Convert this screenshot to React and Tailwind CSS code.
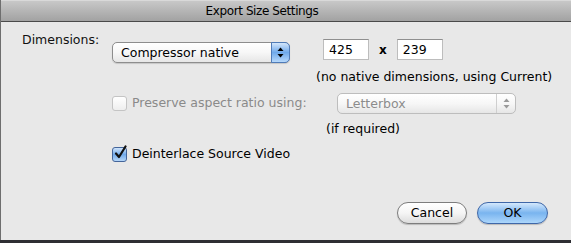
const Arrows = ({ color = '#000' }) => (
  <svg width="7" height="11" viewBox="0 0 7 11">
    <path d="M3.5 0.5 L6.5 4 L0.5 4 Z" fill={color} />
    <path d="M3.5 10.5 L6.5 7 L0.5 7 Z" fill={color} />
  </svg>
);

const Popup = ({ label, disabled, className }) => (
  <div
    className={
      'relative flex h-[21px] items-center rounded-[5px] border bg-linear-to-b from-white via-[#f7f7f7] to-[#e6e6e6] ' +
      (disabled ? 'border-[#bdbdbd] text-[#8c8c8c] ' : 'border-[#8d8d8d] text-black shadow-[0_1px_1px_rgba(0,0,0,0.15)] ') +
      className
    }
  >
    <span className="pl-[8px] leading-[19px]">{label}</span>
    {disabled ? (
      <div className="absolute top-0 right-0 bottom-0 flex w-[19px] items-center justify-center border-l border-[#cfcfcf]">
        <Arrows color="#9a9a9a" />
      </div>
    ) : (
      <div className="absolute top-[-1px] right-[-1px] bottom-[-1px] flex w-[19px] items-center justify-center rounded-r-[5px] border border-[#4f7bb8] bg-linear-to-b from-[#d3e6fb] via-[#6fa9ea] to-[#b6d8fb]">
        <Arrows />
      </div>
    )}
  </div>
);

const Checkbox = ({ checked, disabled }) =>
  checked ? (
    <div className="relative h-[15px] w-[15px] rounded-[3px] border border-[#44659a] bg-linear-to-b from-[#cfe4fb] via-[#72aaea] to-[#b5d6f8]">
      <svg className="absolute left-[1px] top-[-3px]" width="13" height="15" viewBox="0 0 13 15">
        <path d="M2 8.5 L5 12 L11.5 1.5" fill="none" stroke="#111" strokeWidth="2.2" strokeLinecap="round" strokeLinejoin="round" />
      </svg>
    </div>
  ) : (
    <div
      className={
        'h-[15px] w-[15px] rounded-[3px] border bg-linear-to-b from-white to-[#eeeeee] ' +
        (disabled ? 'border-[#c4c4c4]' : 'border-[#888]')
      }
    />
  );

const Field = ({ value }) => (
  <div className="h-[21px] w-[46px] border border-[#bdbdbd] border-t-[#8f8f8f] bg-white pl-[5px] leading-[19px] text-black">
    {value}
  </div>
);

export default function App() {
  return (
    <div
      className="h-[243px] w-[571px] overflow-hidden bg-[#2e2e33] text-[12.5px]"
      style={{ fontFamily: '"DejaVu Sans", "Liberation Sans", sans-serif' }}
    >
      <div className="flex h-[240px] flex-col border-l border-[#6e6e6e] bg-[#e8e8e8]">
        <div className="flex h-[22px] items-center justify-center border-t border-b border-t-[#d9d9d9] border-b-[#4a4a4a] bg-linear-to-b from-[#c8c8c8] to-[#a2a2a2] pr-[48px] text-[12px] tracking-[-0.4px] text-black">
          Export Size Settings
        </div>

        <div className="flex pt-[12px]">
          <div className="-mt-[2px] w-[111px] pl-[21px] leading-[16px] text-[#111]">Dimensions:</div>
          <div className="flex flex-col">
            <div className="flex items-start">
              <Popup label="Compressor native" className="mt-[8px] w-[178px]" />
              <div className="mt-[5px] ml-[33px] flex items-center">
                <Field value="425" />
                <span className="mx-[10px] text-[12px] font-bold">x</span>
                <Field value="239" />
              </div>
            </div>
            <div className="mt-[6px] ml-[204px] leading-[16px] text-black">(no native dimensions, using Current)</div>

            <div className="mt-[8px] flex items-center">
              <Checkbox disabled />
              <span className="ml-[5px] w-[205px] text-[#8a8a8a]">Preserve aspect ratio using:</span>
              <Popup label="Letterbox" disabled className="w-[179px]" />
            </div>
            <div className="mt-[7px] ml-[214px] leading-[16px] text-black">(if required)</div>

            <div className="mt-[8px] flex items-center">
              <Checkbox checked />
              <span className="ml-[5px] text-black">Deinterlace Source Video</span>
            </div>
          </div>
        </div>

        <div className="mt-auto mb-[16px] flex justify-end gap-[10px] pr-[23px]">
          <button className="h-[22px] w-[70px] rounded-full border border-[#7d7d7d] bg-linear-to-b from-white via-[#f5f5f5] to-[#dcdcdc] text-[12.5px] text-black shadow-[0_1px_1px_rgba(0,0,0,0.2)]">
            Cancel
          </button>
          <button className="h-[22px] w-[71px] rounded-full border border-[#3f67a8] bg-linear-to-b from-[#d4e8fc] via-[#79b4ef] to-[#acd6fb] text-[12.5px] text-black shadow-[0_1px_1px_rgba(0,0,0,0.2)]">
            OK
          </button>
        </div>
      </div>
    </div>
  );
}
